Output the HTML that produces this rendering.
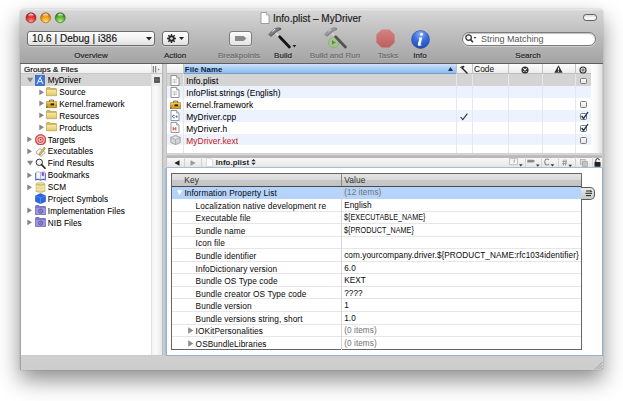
<!DOCTYPE html>
<html><head><meta charset="utf-8">
<style>
*{box-sizing:border-box;margin:0;padding:0}
html,body{width:623px;height:401px;overflow:hidden;background:#fff;font-family:"Liberation Sans",sans-serif;color:#000}
.a{position:absolute}
#win{position:absolute;left:20px;top:9px;width:583px;height:361px;border-radius:4px 4px 0 0;background:linear-gradient(#cbcbcb 96%,#d0d0d0 96%,#cdcdcd);
 box-shadow:0 10px 22px rgba(0,0,0,.45),0 0 2px rgba(0,0,0,.2)}
#tb{position:absolute;left:20px;top:9px;width:583px;height:55px;border-radius:4px 4px 0 0;
 background:linear-gradient(#ececec,#d6d6d6 4%,#bebebe 45%,#a4a4a4);border-bottom:1px solid #5e5e5e}
.tl{position:absolute;top:12.5px;width:10px;height:10px;border-radius:50%;box-shadow:0 0.5px 0.5px rgba(255,255,255,.6)}
.lbl{position:absolute;top:50.8px;font-size:8px;line-height:10px;color:#1a1a1a;text-align:center;white-space:nowrap;text-shadow:0 1px 0 rgba(255,255,255,.3);-webkit-text-stroke:.15px currentColor}
.lbl.dis{color:#6a6a6a}
.t{position:absolute;font-size:8.4px;letter-spacing:.08px;white-space:nowrap;line-height:12px;-webkit-text-stroke:.05px currentColor}
.btn{position:absolute;border:1px solid #6c6c6c;border-radius:3px;background:linear-gradient(#fefefe,#f2f2f2 50%,#e0e0e0);box-shadow:0 1px 0 rgba(255,255,255,.35)}
</style></head><body>
<div id="win"></div>
<div id="tb"></div>
<!-- traffic lights -->
<svg class="a" style="left:25px;top:12px" width="42" height="12" viewBox="0 0 42 12">
<defs>
<radialGradient id="r1" cx=".5" cy=".85" r=".75"><stop offset="0" stop-color="#ff9a90"/><stop offset=".55" stop-color="#e03a32"/><stop offset="1" stop-color="#b01c16"/></radialGradient>
<radialGradient id="r2" cx=".5" cy=".85" r=".75"><stop offset="0" stop-color="#ffe070"/><stop offset=".55" stop-color="#f4a21a"/><stop offset="1" stop-color="#c06a08"/></radialGradient>
<radialGradient id="r3" cx=".5" cy=".85" r=".75"><stop offset="0" stop-color="#b8f090"/><stop offset=".55" stop-color="#62b83a"/><stop offset="1" stop-color="#2e7a18"/></radialGradient>
<linearGradient id="hl" x1="0" y1="0" x2="0" y2="1"><stop offset="0" stop-color="#fff" stop-opacity=".95"/><stop offset="1" stop-color="#fff" stop-opacity="0"/></linearGradient>
</defs>
<circle cx="6" cy="5.8" r="5" fill="url(#r1)" stroke="#8a1a14" stroke-width=".6"/><ellipse cx="6" cy="3.2" rx="2.8" ry="1.8" fill="url(#hl)"/>
<circle cx="20.6" cy="5.8" r="5" fill="url(#r2)" stroke="#9a5a10" stroke-width=".6"/><ellipse cx="20.6" cy="3.2" rx="2.8" ry="1.8" fill="url(#hl)"/>
<circle cx="35.2" cy="5.8" r="5" fill="url(#r3)" stroke="#2a6a18" stroke-width=".6"/><ellipse cx="35.2" cy="3.2" rx="2.8" ry="1.8" fill="url(#hl)"/>
</svg>
<!-- title -->
<svg class="a" style="left:260px;top:12px" width="10" height="12" viewBox="0 0 10 12"><path d="M1 .5h5.5L9 3v8.5H1z" fill="#fff" stroke="#8a8a8a" stroke-width=".8"/><path d="M6.5 .5V3H9" fill="#e8e8e8" stroke="#8a8a8a" stroke-width=".6"/></svg>
<div class="a" style="left:273px;top:11.5px;font-size:10px;line-height:14px;color:#1a1a1a;white-space:nowrap;-webkit-text-stroke:.15px #1a1a1a">Info.plist – MyDriver</div>
<!-- toolbar pill -->
<div class="a" style="left:583px;top:14.2px;width:14px;height:6.4px;border-radius:3.2px;border:1px solid #606060;background:linear-gradient(#d8d8d8,#fafafa 60%,#eee)"></div>
<!-- popup -->
<div class="btn" style="left:27px;top:31px;width:128px;height:15px"></div>
<div class="a" style="left:32px;top:31px;font-size:10px;line-height:15px;color:#111;white-space:nowrap;letter-spacing:.05px;-webkit-text-stroke:.15px #111">10.6 | Debug | i386</div>
<svg class="a" style="left:146px;top:36.5px" width="6" height="4"><path d="M0 0h6L3 3.5z" fill="#222"/></svg>
<!-- action -->
<div class="btn" style="left:161.5px;top:31px;width:27px;height:14.5px"></div>
<svg class="a" style="left:166px;top:33px" width="11" height="11" viewBox="0 0 11 11"><circle cx="5.5" cy="5.5" r="3.1" fill="#262626"/><path d="M5.5 1v9M1 5.5h9M2.3 2.3l6.4 6.4M8.7 2.3l-6.4 6.4" stroke="#262626" stroke-width="1.5"/><circle cx="5.5" cy="5.5" r="1.3" fill="#eee"/></svg>
<svg class="a" style="left:179.2px;top:37px" width="5" height="3"><path d="M0 0h5L2.5 3z" fill="#222"/></svg>
<!-- breakpoints -->
<div class="a" style="left:229px;top:31px;width:22.5px;height:15px;border:1px solid #7c7c7c;border-radius:3px;background:linear-gradient(#fbfbfb,#e4e4e4);box-shadow:0 1px 0 rgba(255,255,255,.3)"></div>
<svg class="a" style="left:235px;top:36px" width="12" height="5"><path d="M0 0h8.5L11.5 2.5 8.5 5H0z" fill="#8a8a8a"/></svg>
<!-- build hammer -->
<svg class="a" style="left:262px;top:24px" width="40" height="28" viewBox="0 0 40 28">
 <defs><linearGradient id="hh" x1="0" y1="0" x2="1" y2="1"><stop offset="0" stop-color="#d8d8d8"/><stop offset=".45" stop-color="#808080"/><stop offset="1" stop-color="#2a2a2a"/></linearGradient></defs>
 <path d="M13.8 8.8L17.8 13" stroke="#d6d6d6" stroke-width="2.3"/>
 <path d="M17.6 12.8L27.4 23" stroke="#141414" stroke-width="2.8" stroke-linecap="round"/>
 <path d="M6.8 10.4L8.8 12.4 12.6 9.4Q14 8.2 14.6 7.8Q16.4 6.2 18.8 5.5L18.5 4Q15.5 3.5 13.2 4.8Q11.6 5.2 10.6 6.6z" fill="url(#hh)" stroke="#3a3a3a" stroke-width=".6"/>
 <path d="M10.2 7.6Q11.4 5.9 13 5.4" stroke="#fff" stroke-width="1" fill="none" opacity=".9"/>
 <path d="M30.6 21h3.6l-1.8 2.5z" fill="#1a1a1a"/>
</svg>
<!-- build and run -->
<svg class="a" style="left:318px;top:24px" width="40" height="28" viewBox="0 0 40 28" opacity=".6">
 <circle cx="15.7" cy="18.5" r="5.3" fill="#98d070" stroke="#5a9a3a" stroke-width=".6"/>
 <path d="M14 16.2v4.6l4-2.3z" fill="#2e6a18"/>
 <path d="M13.8 8.8L17.8 13" stroke="#d6d6d6" stroke-width="2.3"/>
 <path d="M17.6 12.8L27.4 23" stroke="#141414" stroke-width="2.8" stroke-linecap="round"/>
 <path d="M6.8 10.4L8.8 12.4 12.6 9.4Q14 8.2 14.6 7.8Q16.4 6.2 18.8 5.5L18.5 4Q15.5 3.5 13.2 4.8Q11.6 5.2 10.6 6.6z" fill="url(#hh)" stroke="#3a3a3a" stroke-width=".6"/>
 <path d="M10.2 7.6Q11.4 5.9 13 5.4" stroke="#fff" stroke-width="1" fill="none" opacity=".9"/>
</svg>
<!-- tasks -->
<svg class="a" style="left:375.5px;top:29px" width="19" height="19" viewBox="0 0 19 19"><defs><linearGradient id="tg" x1="0" y1="0" x2="0" y2="1"><stop offset="0" stop-color="#d48282"/><stop offset="1" stop-color="#bc5e5e"/></linearGradient></defs><path d="M5.6.4h7.8l5.2 5.2v7.8l-5.2 5.2H5.6L.4 13.4V5.6z" fill="url(#tg)"/></svg>
<!-- info -->
<svg class="a" style="left:411px;top:29.5px" width="19" height="19" viewBox="0 0 19 19"><defs><radialGradient id="ig" cx=".5" cy=".2" r=".85"><stop offset="0" stop-color="#8ab0f6"/><stop offset=".45" stop-color="#3c6fdc"/><stop offset="1" stop-color="#1c45b0"/></radialGradient></defs><circle cx="9.5" cy="9.5" r="9" fill="url(#ig)" stroke="#20409a" stroke-width=".5"/><circle cx="10.5" cy="4.2" r="1.5" fill="#fff"/><path d="M8 7.6h3.3l-1.7 6.6c-.1.5.2.6 1 .2l-.1.8c-1.7 1-4.1 1-3.6-.9l1.4-5.6H7.8z" fill="#fff"/></svg>
<!-- search -->
<div class="a" style="left:461.5px;top:31.5px;width:134.5px;height:14.5px;border-radius:7.5px;border:1px solid #7a7a7a;background:#fff;box-shadow:inset 0 1px 1px rgba(0,0,0,.25),0 1px 0 rgba(255,255,255,.35)"></div>
<svg class="a" style="left:465px;top:34px" width="12" height="9" viewBox="0 0 12 9"><circle cx="3.6" cy="3.6" r="2.8" fill="none" stroke="#333" stroke-width="1.3"/><path d="M5.6 5.6l2.4 2.6" stroke="#333" stroke-width="1.6"/><path d="M8.5 3h3l-1.5 1.8z" fill="#333"/></svg>
<div class="a" style="left:481px;top:31.5px;font-size:9px;line-height:14.5px;color:#555;white-space:nowrap">String Matching</div>
<!-- labels -->
<div class="lbl" style="left:61px;width:60px">Overview</div>
<div class="lbl" style="left:160px;width:30px">Action</div>
<div class="lbl dis" style="left:209px;width:60px">Breakpoints</div>
<div class="lbl" style="left:268px;width:30px">Build</div>
<div class="lbl dis" style="left:305px;width:60px">Build and Run</div>
<div class="lbl dis" style="left:373px;width:30px">Tasks</div>
<div class="lbl" style="left:405px;width:30px">Info</div>
<div class="lbl" style="left:510px;width:36px">Search</div>


<!-- sidebar -->
<svg width="0" height="0" style="position:absolute"><defs><linearGradient id="fg" x1="0" y1="0" x2="0" y2="1"><stop offset="0" stop-color="#f6e8a8"/><stop offset="1" stop-color="#e2c868"/></linearGradient></defs></svg>
<div class="a" style="left:21px;top:64px;width:141px;height:291px;background:#fff"></div>
<div class="a" style="left:151px;top:64px;width:11px;height:291px;background:linear-gradient(90deg,#f4f4f4,#fafafa 40%,#e8e8e8);border-left:1px solid #e2e2e2"></div>
<div class="a" style="left:21px;top:64px;width:130px;height:10px;background:linear-gradient(#fdfdfd,#f0f0f0);border-bottom:1px solid #c8c8c8"></div>
<div class="t" style="left:24px;top:63.8px;font-size:8px;line-height:11px;color:#111;-webkit-text-stroke:.2px #111">Groups &amp; Files</div>
<div class="a" style="left:151px;top:64px;width:11px;height:10px;background:linear-gradient(#fbfbfb,#ececec);border-bottom:1px solid #c8c8c8;border-left:1px solid #ddd"></div>
<svg class="a" style="left:152px;top:66px" width="9" height="7"><path d="M1.3 0v6.5M3.7 0v6.5" stroke="#6a6a6a" stroke-width="1"/><path d="M6.2 2.4l1.4 1L6.2 4.4z" fill="#555"/></svg>
<div class="a" style="left:21px;top:74px;width:130px;height:12px;background:#d5d5d5"></div>
<div class="a" style="left:152px;top:74px;width:10px;height:12px;background:#ececec"></div>
<svg class="a" style="left:153.5px;top:77px" width="6" height="6"><rect x=".3" y=".3" width="5.4" height="5.4" rx=".5" fill="#444" stroke="#333" stroke-width=".4"/><path d="M1 2.2h4M1 3.8h4" stroke="#a0a0a0" stroke-width=".6"/></svg>
<svg class="a" style="left:27.0px;top:76.6px" width="7" height="6"><path d="M0 .8h6.2L3.1 5.6z" fill="#858585"/></svg>
<svg class="a" style="left:34.5px;top:74.6px" width="11" height="11" viewBox="0 0 11 11"><rect x=".5" y=".5" width="9" height="10" fill="#3d78d8" stroke="#1f4fa8" stroke-width=".6"/><path d="M2 9L5 2.5 8 9M3.2 6.6h3.6M5 2.5l1.5-1" stroke="#fff" stroke-width=".9" fill="none"/></svg>
<div class="t" style="left:47.8px;top:75.1px;font-size:8.2px">MyDriver</div>
<svg class="a" style="left:38.5px;top:88.5px" width="6" height="7"><path d="M.3 .4L5 3.3 .3 6.2z" fill="#858585"/></svg>
<svg class="a" style="left:46.0px;top:86.5px" width="11" height="11" viewBox="0 0 11 11"><path d="M.5 8.7V1.3Q.5 .6 1.2 .6H4L5 1.6h4.9Q10.6 1.6 10.6 2.3V8.7z" fill="#d8bc5c" stroke="#a88a30" stroke-width=".6"/><path d="M.8 3h9.5v5.4H.8z" fill="url(#fg)"/></svg>
<div class="t" style="left:59.3px;top:87.0px;font-size:8.2px">Source</div>
<svg class="a" style="left:38.5px;top:100.4px" width="6" height="7"><path d="M.3 .4L5 3.3 .3 6.2z" fill="#858585"/></svg>
<svg class="a" style="left:46.0px;top:98.4px" width="11" height="11" viewBox="0 0 11 11"><path d="M.6 3.6h10v6H.6z" fill="#d8a628" stroke="#7a5a0a" stroke-width=".6"/><path d="M.6 3.6h10v2H.6z" fill="#ecc858"/><path d="M3.6 3.6V2.1h4v1.5" fill="none" stroke="#5a4208" stroke-width=".8"/><rect x="4.6" y="5.4" width="3.4" height="1.9" fill="#2a1e06"/><path d="M1.4 8l-1 2" stroke="#444" stroke-width=".7"/></svg>
<div class="t" style="left:59.3px;top:98.9px;font-size:8.2px">Kernel.framework</div>
<svg class="a" style="left:38.5px;top:112.2px" width="6" height="7"><path d="M.3 .4L5 3.3 .3 6.2z" fill="#858585"/></svg>
<svg class="a" style="left:46.0px;top:110.2px" width="11" height="11" viewBox="0 0 11 11"><path d="M.5 8.7V1.3Q.5 .6 1.2 .6H4L5 1.6h4.9Q10.6 1.6 10.6 2.3V8.7z" fill="#d8bc5c" stroke="#a88a30" stroke-width=".6"/><path d="M.8 3h9.5v5.4H.8z" fill="url(#fg)"/></svg>
<div class="t" style="left:59.3px;top:110.7px;font-size:8.2px">Resources</div>
<svg class="a" style="left:38.5px;top:124.1px" width="6" height="7"><path d="M.3 .4L5 3.3 .3 6.2z" fill="#858585"/></svg>
<svg class="a" style="left:46.0px;top:122.1px" width="11" height="11" viewBox="0 0 11 11"><path d="M.5 8.7V1.3Q.5 .6 1.2 .6H4L5 1.6h4.9Q10.6 1.6 10.6 2.3V8.7z" fill="#d8bc5c" stroke="#a88a30" stroke-width=".6"/><path d="M.8 3h9.5v5.4H.8z" fill="url(#fg)"/></svg>
<div class="t" style="left:59.3px;top:122.6px;font-size:8.2px">Products</div>
<svg class="a" style="left:27.0px;top:136.0px" width="6" height="7"><path d="M.3 .4L5 3.3 .3 6.2z" fill="#858585"/></svg>
<svg class="a" style="left:34.5px;top:134.0px" width="11" height="11" viewBox="0 0 11 11"><circle cx="5.6" cy="5.8" r="5.5" fill="#d84a4a" stroke="#b83030" stroke-width=".4"/><circle cx="5.6" cy="5.8" r="4.2" fill="#f6d0d0"/><circle cx="5.6" cy="5.8" r="3.1" fill="#dc5050"/><circle cx="5.6" cy="5.8" r="1.9" fill="#fbe4e4"/><circle cx="5.6" cy="5.8" r="1" fill="#b83a3a"/></svg>
<div class="t" style="left:47.8px;top:134.5px;font-size:8.2px">Targets</div>
<svg class="a" style="left:27.0px;top:147.9px" width="6" height="7"><path d="M.3 .4L5 3.3 .3 6.2z" fill="#858585"/></svg>
<svg class="a" style="left:34.5px;top:145.9px" width="11" height="11" viewBox="0 0 11 11"><path d="M.8 6.2L5 2.4 10.2 6.4 6 10.4z" fill="#f4f4f4" stroke="#7a7a7a" stroke-width=".6"/><path d="M.8 6.2v1L6 11.2V10.4zM6 10.4v.8L10.2 7.2V6.4z" fill="#c8c8c8"/><path d="M4.4 7.6L9 1.2 10.4 2.2 5.8 8.4 4.2 8.8z" fill="#e6c63a" stroke="#6a5a10" stroke-width=".45"/></svg>
<div class="t" style="left:47.8px;top:146.4px;font-size:8.2px">Executables</div>
<svg class="a" style="left:27.0px;top:159.8px" width="7" height="6"><path d="M0 .8h6.2L3.1 5.6z" fill="#858585"/></svg>
<svg class="a" style="left:34.5px;top:157.8px" width="11" height="11" viewBox="0 0 11 11"><circle cx="4.3" cy="4.3" r="3.2" fill="#f4f4f4" stroke="#333" stroke-width="1"/><path d="M6.6 6.6l3.4 3.6" stroke="#222" stroke-width="1.6" stroke-linecap="round"/></svg>
<div class="t" style="left:47.8px;top:158.3px;font-size:8.2px">Find Results</div>
<svg class="a" style="left:27.0px;top:171.6px" width="6" height="7"><path d="M.3 .4L5 3.3 .3 6.2z" fill="#858585"/></svg>
<svg class="a" style="left:34.5px;top:169.6px" width="11" height="11" viewBox="0 0 11 11"><path d="M.3 3V10.4Q3 9.6 5.5 10.6 8 9.6 10.7 10.4V3z" fill="#2c4cb0"/><path d="M1 2.2Q3.2 1.2 5.5 2.5 7.8 1.2 10 2.2V9.2Q7.8 8.4 5.5 9.6 3.2 8.4 1 9.2z" fill="#f4f6fc" stroke="#6a7ac0" stroke-width=".5"/><path d="M5.5 2.5V9.6" stroke="#6a7ac0" stroke-width=".5"/><path d="M6.8 2.2h2v4.2L7.8 5.4 6.8 6.4z" fill="#8a3ec8"/></svg>
<div class="t" style="left:47.8px;top:170.1px;font-size:8.2px">Bookmarks</div>
<svg class="a" style="left:27.0px;top:183.5px" width="6" height="7"><path d="M.3 .4L5 3.3 .3 6.2z" fill="#858585"/></svg>
<svg class="a" style="left:34.5px;top:181.5px" width="11" height="11" viewBox="0 0 11 11"><ellipse cx="5.5" cy="2" rx="4.5" ry="1.4" fill="#efe2a8" stroke="#b09a50" stroke-width=".5"/><path d="M1 2v7.5Q5.5 11.2 10 9.5V2Q5.5 3.7 1 2z" fill="#e6d48a" stroke="#b09a50" stroke-width=".5"/><path d="M1 4.5Q5.5 6.2 10 4.5M1 7Q5.5 8.7 10 7" stroke="#fff6cc" stroke-width=".7" fill="none"/></svg>
<div class="t" style="left:47.8px;top:182.0px;font-size:8.2px">SCM</div>

<svg class="a" style="left:34.5px;top:193.4px" width="11" height="11" viewBox="0 0 11 11"><path d="M5.5 .5L10.5 2.8V8.5L5.5 10.8.5 8.5V2.8z" fill="#2a66e0" stroke="#1a44a8" stroke-width=".5"/><path d="M.5 2.8L5.5 5 10.5 2.8M5.5 5v5.8" stroke="#7aa6ff" stroke-width=".5" fill="none"/></svg>
<div class="t" style="left:47.8px;top:193.9px;font-size:8.2px">Project Symbols</div>
<svg class="a" style="left:27.0px;top:207.3px" width="6" height="7"><path d="M.3 .4L5 3.3 .3 6.2z" fill="#858585"/></svg>
<svg class="a" style="left:34.5px;top:205.3px" width="11" height="11" viewBox="0 0 11 11"><path d="M.5 2.2V1.2Q.5 .5 1.2 .5H4L5 1.5h5Q10.8 1.5 10.8 2.2V9.5H.5z" fill="#7e78cc" stroke="#524c9c" stroke-width=".6"/><path d="M.8 3h9.7v6.2H.8z" fill="#9c96de"/><circle cx="5.6" cy="6.1" r="2" fill="none" stroke="#5c56a8" stroke-width="1"/><circle cx="5.6" cy="6.1" r=".7" fill="#5c56a8"/></svg>
<div class="t" style="left:47.8px;top:205.8px;font-size:8.2px">Implementation Files</div>
<svg class="a" style="left:27.0px;top:219.2px" width="6" height="7"><path d="M.3 .4L5 3.3 .3 6.2z" fill="#858585"/></svg>
<svg class="a" style="left:34.5px;top:217.2px" width="11" height="11" viewBox="0 0 11 11"><path d="M.5 2.2V1.2Q.5 .5 1.2 .5H4L5 1.5h5Q10.8 1.5 10.8 2.2V9.5H.5z" fill="#7e78cc" stroke="#524c9c" stroke-width=".6"/><path d="M.8 3h9.7v6.2H.8z" fill="#9c96de"/><circle cx="5.6" cy="6.1" r="2" fill="none" stroke="#5c56a8" stroke-width="1"/><circle cx="5.6" cy="6.1" r=".7" fill="#5c56a8"/></svg>
<div class="t" style="left:47.8px;top:217.7px;font-size:8.2px">NIB Files</div>
<div class="a" style="left:162px;top:64px;width:5px;height:291px;background:linear-gradient(90deg,#b4b4b4,#c0c0c0 25%,#d4d4d4 35%,#d0d0d0 85%,#a8a8a8)"></div>
<!-- file list -->
<div class="a" style="left:167px;top:64px;width:435px;height:89px;background:#fff"></div>
<div class="a" style="left:167px;top:64px;width:435px;height:10px;background:linear-gradient(#fdfdfd,#ececec);border-bottom:1px solid #bdbdbd"></div>
<div class="a" style="left:183px;top:64px;width:273px;height:10px;background:linear-gradient(#cfe2fb,#a9cdf6 50%,#8ebcf2);border-bottom:1px solid #7a9cc8"></div>
<div class="t" style="left:184.8px;top:64.3px;font-size:7.8px;line-height:11px;color:#0e1c3c;font-weight:bold;-webkit-text-stroke:0">File Name</div>
<svg class="a" style="left:447.5px;top:67px" width="5" height="4"><path d="M0 4L2.5 0 5 4z" fill="#1e3050"/></svg>
<div class="a" style="left:456px;top:64px;width:1px;height:10px;background:#c4c4c4"></div>
<div class="a" style="left:472px;top:64px;width:1px;height:10px;background:#c4c4c4"></div>
<div class="a" style="left:508px;top:64px;width:1px;height:10px;background:#c4c4c4"></div>
<div class="a" style="left:541.5px;top:64px;width:1px;height:10px;background:#c4c4c4"></div>
<div class="a" style="left:574.5px;top:64px;width:1px;height:10px;background:#c4c4c4"></div>
<div class="a" style="left:590.5px;top:64px;width:1px;height:10px;background:#c4c4c4"></div>
<div class="a" style="left:182.5px;top:64px;width:1px;height:10px;background:#c4c4c4"></div>
<svg class="a" style="left:459px;top:65px" width="10" height="9" viewBox="0 0 10 9"><path d="M3 3l5 5" stroke="#222" stroke-width="1.4" stroke-linecap="round"/><path d="M.8 2.6Q2.5 .6 5 .8L5.6 1.6 3.8 3.6 2.8 2.6Q1.8 2.4 1.2 3z" fill="#333"/></svg>
<div class="t" style="left:474px;top:64px;font-size:8.4px;line-height:11px;color:#1a1a1a">Code</div>
<svg class="a" style="left:521px;top:65.5px" width="8" height="8"><circle cx="4" cy="4" r="3.6" fill="#333"/><path d="M2.4 2.4l3.2 3.2M5.6 2.4L2.4 5.6" stroke="#fff" stroke-width="1.1"/></svg>
<svg class="a" style="left:553.5px;top:65px" width="9" height="8"><path d="M4.5 .3L8.7 7.7H.3z" fill="#333"/><path d="M4.5 2.8v2.6" stroke="#fff" stroke-width="1"/><circle cx="4.5" cy="6.4" r=".5" fill="#fff"/></svg>
<svg class="a" style="left:578.5px;top:65.5px" width="8" height="8"><circle cx="4" cy="4" r="3.6" fill="#333"/><circle cx="4" cy="4" r="2" fill="none" stroke="#fff" stroke-width="1"/><circle cx="4" cy="4" r=".7" fill="#fff"/></svg>
<div class="a" style="left:167px;top:74.00px;width:424px;height:11.90px;background:#d4d4d4"></div>
<svg class="a" style="left:169.5px;top:74.7px" width="11" height="11" viewBox="0 0 11 11"><path d="M1 .5h5.5L9 3v7.5H1z" fill="#fdfdfd" stroke="#6a6a6a" stroke-width=".7"/><path d="M6.5 .5V3H9" fill="#e4e4e4" stroke="#6a6a6a" stroke-width=".5"/><path d="M2.5 4.6h4.5M2.5 6.1h4.5M2.5 7.6h4.5M4.5 4.6v4" stroke="#a8a8a8" stroke-width=".5"/></svg>
<div class="t" style="left:186.3px;top:75.00px;color:#000">Info.plist</div>
<div class="a" style="left:580px;top:77.60px;width:6.5px;height:6.5px;border:1px solid #7a7a7a;border-radius:1.5px;background:linear-gradient(#fdfdfd,#e4e4e4)"></div>
<div class="a" style="left:167px;top:85.90px;width:424px;height:11.90px;background:#edf3fe"></div>
<svg class="a" style="left:169.5px;top:86.6px" width="11" height="11" viewBox="0 0 11 11"><path d="M1 .5h5.5L9 3v7.5H1z" fill="#fdfdfd" stroke="#6a6a6a" stroke-width=".7"/><path d="M6.5 .5V3H9" fill="#e4e4e4" stroke="#6a6a6a" stroke-width=".5"/><path d="M2.5 4.6h4.5M2.5 6.1h4.5M2.5 7.6h4.5M4.5 4.6v4" stroke="#a8a8a8" stroke-width=".5"/></svg>
<div class="t" style="left:186.3px;top:86.90px;color:#000">InfoPlist.strings (English)</div>
<div class="a" style="left:167px;top:97.80px;width:424px;height:11.90px;background:#fff"></div>
<svg class="a" style="left:169.5px;top:98.5px" width="11" height="11" viewBox="0 0 11 11"><path d="M.6 3.6h10v6H.6z" fill="#d8a628" stroke="#7a5a0a" stroke-width=".6"/><path d="M.6 3.6h10v2H.6z" fill="#ecc858"/><path d="M3.6 3.6V2.1h4v1.5" fill="none" stroke="#5a4208" stroke-width=".8"/><rect x="4.6" y="5.4" width="3.4" height="1.9" fill="#2a1e06"/><path d="M1.4 8l-1 2" stroke="#444" stroke-width=".7"/></svg>
<div class="t" style="left:186.3px;top:98.80px;color:#000">Kernel.framework</div>
<div class="a" style="left:580px;top:101.40px;width:6.5px;height:6.5px;border:1px solid #7a7a7a;border-radius:1.5px;background:linear-gradient(#fdfdfd,#e4e4e4)"></div>
<div class="a" style="left:167px;top:109.70px;width:424px;height:11.90px;background:#edf3fe"></div>
<svg class="a" style="left:169.5px;top:110.4px" width="11" height="11" viewBox="0 0 11 11"><path d="M1 .5h5.5L9 3v7.5H1z" fill="#fdfdfd" stroke="#6a6a6a" stroke-width=".7"/><path d="M6.5 .5V3H9" fill="#e4e4e4" stroke="#6a6a6a" stroke-width=".5"/><path d="M4.6 5.6Q3.8 4.9 3.1 5.3 2.3 5.9 2.6 7 3 8 4.6 7.6" stroke="#2848b8" stroke-width=".9" fill="none"/><path d="M5.3 6.6h2.6M6.6 5.3v2.6" stroke="#2848b8" stroke-width=".6"/></svg>
<div class="t" style="left:186.3px;top:110.70px;color:#000">MyDriver.cpp</div>
<svg class="a" style="left:460px;top:112.90px" width="8" height="8"><path d="M.6 4L2.8 6.6 7.4 .6" stroke="#333" stroke-width="1.1" fill="none"/></svg>
<div class="a" style="left:580px;top:113.30px;width:6.5px;height:6.5px;border:1px solid #7a7a7a;border-radius:1.5px;background:linear-gradient(#fdfdfd,#e4e4e4)"></div>
<svg class="a" style="left:580px;top:111.30px" width="9" height="9"><path d="M1.6 5L3.6 7.4 8 1" stroke="#1a2a50" stroke-width="1.3" fill="none"/></svg>
<div class="a" style="left:167px;top:121.60px;width:424px;height:11.90px;background:#fff"></div>
<svg class="a" style="left:169.5px;top:122.3px" width="11" height="11" viewBox="0 0 11 11"><path d="M1 .5h5.5L9 3v7.5H1z" fill="#fdfdfd" stroke="#6a6a6a" stroke-width=".7"/><path d="M6.5 .5V3H9" fill="#e4e4e4" stroke="#6a6a6a" stroke-width=".5"/><path d="M3.2 5v3.6M5.8 5v3.6M3.2 6.8h2.6" stroke="#c02828" stroke-width=".8"/></svg>
<div class="t" style="left:186.3px;top:122.60px;color:#000">MyDriver.h</div>
<div class="a" style="left:580px;top:125.20px;width:6.5px;height:6.5px;border:1px solid #7a7a7a;border-radius:1.5px;background:linear-gradient(#fdfdfd,#e4e4e4)"></div>
<svg class="a" style="left:580px;top:123.20px" width="9" height="9"><path d="M1.6 5L3.6 7.4 8 1" stroke="#1a2a50" stroke-width="1.3" fill="none"/></svg>
<div class="a" style="left:167px;top:133.50px;width:424px;height:11.90px;background:#edf3fe"></div>
<svg class="a" style="left:169.5px;top:134.2px" width="11" height="11" viewBox="0 0 11 11"><path d="M.8 3.4L5.5 1.4 10.2 3.4V8.6L5.5 10.6.8 8.6z" fill="#d6d6d6" stroke="#7a7a7a" stroke-width=".6"/><path d="M.8 3.4L5.5 5.4 10.2 3.4" fill="#f2f2f2" stroke="#7a7a7a" stroke-width=".5"/><path d="M5.5 5.4v5.2" stroke="#8a8a8a" stroke-width=".5"/></svg>
<div class="t" style="left:186.3px;top:134.50px;color:#c41f1f">MyDriver.kext</div>
<div class="a" style="left:580px;top:137.10px;width:6.5px;height:6.5px;border:1px solid #7a7a7a;border-radius:1.5px;background:linear-gradient(#fdfdfd,#e4e4e4)"></div>
<div class="a" style="left:456px;top:74px;width:1px;height:78.5px;background:#e4e8ee"></div>
<div class="a" style="left:472px;top:74px;width:1px;height:78.5px;background:#e4e8ee"></div>
<div class="a" style="left:508px;top:74px;width:1px;height:78.5px;background:#e4e8ee"></div>
<div class="a" style="left:541.5px;top:74px;width:1px;height:78.5px;background:#e4e8ee"></div>
<div class="a" style="left:574.5px;top:74px;width:1px;height:78.5px;background:#e4e8ee"></div>
<div class="a" style="left:590.5px;top:74px;width:1px;height:78.5px;background:#e4e8ee"></div>
<div class="a" style="left:182.5px;top:74px;width:1px;height:78.5px;background:#e4e8ee"></div>
<div class="a" style="left:591px;top:64px;width:11px;height:89px;background:linear-gradient(90deg,#fff,#f7f7f7 50%,#e2e2e2)"></div>
<div class="a" style="left:167px;top:152.5px;width:435px;height:5px;background:linear-gradient(#d2d2d2,#d6d6d6 35%,#bababa 55%,#b4b4b4 85%,#c8c8c8)"></div>
<div class="a" style="left:167px;top:157.5px;width:435px;height:10px;background:linear-gradient(#f8f8f8,#e6e6e6);border-bottom:1px solid #a4bcd8"></div>
<!-- editor -->
<div class="a" style="left:166px;top:167.5px;width:436.5px;height:188px;background:#fff;border:1px solid #96aed0;border-top:none"></div>
<div class="a" style="left:162.5px;top:167.5px;width:3.5px;height:188px;background:linear-gradient(90deg,#d2d6dc,#b8c6d8 60%,#a8bcd6)"></div>
<svg class="a" style="left:173.5px;top:159.5px" width="6" height="6"><path d="M5.5 .2v5.6L.3 3z" fill="#222"/></svg>
<div class="a" style="left:184px;top:157px;width:1px;height:10px;background:#d0d0d0"></div>
<svg class="a" style="left:189.5px;top:159.5px" width="6" height="6"><path d="M.5 .2v5.6L5.7 3z" fill="#9a9a9a"/></svg>
<div class="a" style="left:200.5px;top:157px;width:1px;height:10px;background:#d0d0d0"></div>
<svg class="a" style="left:206px;top:158.2px" width="7" height="9" viewBox="0 0 7 9"><path d="M.4 .4h4.2L6.6 2.4v6.2H.4z" fill="#fff" stroke="#bdbdbd" stroke-width=".5"/></svg>
<div class="t" style="left:215.8px;top:156.8px;font-size:7.8px;line-height:11px;color:#222;font-weight:bold;-webkit-text-stroke:0">Info.plist</div>
<svg class="a" style="left:251.3px;top:159.3px" width="5" height="6"><path d="M2.5 0L4.7 2.3H.3zM2.5 6L4.7 3.7H.3z" fill="#222"/></svg>
<div class="a" style="left:524.5px;top:157px;width:1px;height:10px;background:#d4d4d4"></div>
<div class="a" style="left:541px;top:157px;width:1px;height:10px;background:#d4d4d4"></div>
<div class="a" style="left:558.3px;top:157px;width:1px;height:10px;background:#d4d4d4"></div>
<div class="a" style="left:574.8px;top:157px;width:1px;height:10px;background:#d4d4d4"></div>
<div class="a" style="left:592px;top:157px;width:1px;height:10px;background:#d4d4d4"></div>
<svg class="a" style="left:508.5px;top:158px" width="15" height="9" viewBox="0 0 15 9"><path d="M.5 .6h8v6h-8z" fill="#f6f6f6" stroke="#a0a0a0" stroke-width=".6"/><path d="M5.2 1.6v3" stroke="#777" stroke-width=".7"/><path d="M10 6.2h3.6l-1.8 2.2z" fill="#333"/></svg>
<svg class="a" style="left:527px;top:158.5px" width="14" height="8" viewBox="0 0 14 8"><path d="M.3 .8h6l1.8 1.3-1.8 1.3h-6z" fill="#8a8a8a"/><path d="M9 5.6h3.6l-1.8 2.2z" fill="#333"/></svg>
<svg class="a" style="left:543.5px;top:158px" width="14" height="9" viewBox="0 0 14 9"><path d="M5 2Q4.3 1 3 1 .8 1 .8 4 .8 7 3 7 4.3 7 5 6" fill="none" stroke="#8a8a8a" stroke-width="1.1"/><path d="M6.6 6.2h3.6l-1.8 2.2z" fill="#333"/></svg>
<svg class="a" style="left:561.5px;top:158.5px" width="13" height="9" viewBox="0 0 13 9"><path d="M2 .5L1.4 6.5M4.2 .5L3.6 6.5M.4 2.4h4.6M.2 4.6h4.6" stroke="#8a8a8a" stroke-width=".8"/><path d="M6.4 5.8h3.6l-1.8 2.2z" fill="#333"/></svg>
<svg class="a" style="left:579.5px;top:158.5px" width="8" height="8" viewBox="0 0 8 8"><rect x=".5" y=".5" width="4.6" height="4.6" fill="#e0e0e0" stroke="#999" stroke-width=".6"/><rect x="2.6" y="2.6" width="4.8" height="4.8" fill="#c4c4c4" stroke="#999" stroke-width=".6"/></svg>
<svg class="a" style="left:594px;top:157.5px" width="7" height="9" viewBox="0 0 7 9"><path d="M1.8 4V2.5Q1.8 .6 3.6 .6 5.3 .6 5.3 2.2" fill="none" stroke="#222" stroke-width="1"/><rect x=".5" y="4" width="6" height="4.8" rx=".6" fill="#222"/></svg>
<div class="a" style="left:171px;top:173px;width:411px;height:177px;border:1px solid #666;background:#fff"></div>
<div class="a" style="left:172px;top:174px;width:409px;height:12.5px;background:linear-gradient(#e4e4e4,#dadada 52%,#c8c8c8 53%,#c4c4c4);border-bottom:1px solid #4a4a4a"></div>
<div class="a" style="left:341px;top:174px;width:1px;height:12px;background:#8a8a8a"></div>
<div class="t" style="left:184.3px;top:173.5px;color:#383838">Key</div>
<div class="t" style="left:344.2px;top:173.5px;color:#383838">Value</div>
<div class="a" style="left:172px;top:186.50px;width:409px;height:12.55px;background:#b6d4fb"></div>
<svg class="a" style="left:176.6px;top:190.30px" width="6" height="6"><path d="M0 .2h5.4L2.7 5.2z" fill="#fff"/></svg>
<div class="t" style="left:184.4px;top:187.20px;color:#111;font-size:8.3px">Information Property List</div>
<div class="t" style="left:344.2px;top:187.20px;color:#777;font-size:8.2px">(12 items)</div>
<div class="a" style="left:172px;top:210.60px;width:409px;height:1px;background:#e6e6e6"></div>
<div class="t" style="left:195.6px;top:199.75px;color:#111;font-size:8.3px">Localization native development re</div>
<div class="t" style="left:344.2px;top:199.75px;color:#111;font-size:8.2px">English</div>
<div class="a" style="left:172px;top:223.15px;width:409px;height:1px;background:#e6e6e6"></div>
<div class="t" style="left:195.6px;top:212.30px;color:#111;font-size:8.3px">Executable file</div>
<div class="t" style="left:344.2px;top:212.30px;color:#111;font-size:8.2px;transform:scaleX(.875);transform-origin:0 0">${EXECUTABLE_NAME}</div>
<div class="a" style="left:172px;top:235.70px;width:409px;height:1px;background:#e6e6e6"></div>
<div class="t" style="left:195.6px;top:224.85px;color:#111;font-size:8.3px">Bundle name</div>
<div class="t" style="left:344.2px;top:224.85px;color:#111;font-size:8.2px;transform:scaleX(.875);transform-origin:0 0">${PRODUCT_NAME}</div>
<div class="a" style="left:172px;top:248.25px;width:409px;height:1px;background:#e6e6e6"></div>
<div class="t" style="left:195.6px;top:237.40px;color:#111;font-size:8.3px">Icon file</div>
<div class="a" style="left:172px;top:260.80px;width:409px;height:1px;background:#e6e6e6"></div>
<div class="t" style="left:195.6px;top:249.95px;color:#111;font-size:8.3px">Bundle identifier</div>
<div class="t" style="left:344.2px;top:249.95px;color:#111;font-size:8.2px">com.yourcompany.driver.${PRODUCT_NAME:rfc1034identifier}</div>
<div class="a" style="left:172px;top:273.35px;width:409px;height:1px;background:#e6e6e6"></div>
<div class="t" style="left:195.6px;top:262.50px;color:#111;font-size:8.3px">InfoDictionary version</div>
<div class="t" style="left:344.2px;top:262.50px;color:#111;font-size:8.2px">6.0</div>
<div class="a" style="left:172px;top:285.90px;width:409px;height:1px;background:#e6e6e6"></div>
<div class="t" style="left:195.6px;top:275.05px;color:#111;font-size:8.3px">Bundle OS Type code</div>
<div class="t" style="left:344.2px;top:275.05px;color:#111;font-size:8.2px">KEXT</div>
<div class="a" style="left:172px;top:298.45px;width:409px;height:1px;background:#e6e6e6"></div>
<div class="t" style="left:195.6px;top:287.60px;color:#111;font-size:8.3px">Bundle creator OS Type code</div>
<div class="t" style="left:344.2px;top:287.60px;color:#111;font-size:8.2px">????</div>
<div class="a" style="left:172px;top:311.00px;width:409px;height:1px;background:#e6e6e6"></div>
<div class="t" style="left:195.6px;top:300.15px;color:#111;font-size:8.3px">Bundle version</div>
<div class="t" style="left:344.2px;top:300.15px;color:#111;font-size:8.2px">1</div>
<div class="a" style="left:172px;top:323.55px;width:409px;height:1px;background:#e6e6e6"></div>
<div class="t" style="left:195.6px;top:312.70px;color:#111;font-size:8.3px">Bundle versions string, short</div>
<div class="t" style="left:344.2px;top:312.70px;color:#111;font-size:8.2px">1.0</div>
<div class="a" style="left:172px;top:336.10px;width:409px;height:1px;background:#e6e6e6"></div>
<svg class="a" style="left:188px;top:327.15px" width="6" height="7"><path d="M.2 .3L5.4 3.5 .2 6.7z" fill="#8c8c8c"/></svg>
<div class="t" style="left:195.6px;top:325.25px;color:#111;font-size:8.3px">IOKitPersonalities</div>
<div class="t" style="left:344.2px;top:325.25px;color:#777;font-size:8.2px">(0 items)</div>
<svg class="a" style="left:188px;top:339.70px" width="6" height="7"><path d="M.2 .3L5.4 3.5 .2 6.7z" fill="#8c8c8c"/></svg>
<div class="t" style="left:195.6px;top:337.80px;color:#111;font-size:8.3px">OSBundleLibraries</div>
<div class="t" style="left:344.2px;top:337.80px;color:#777;font-size:8.2px">(0 items)</div>
<div class="a" style="left:341px;top:186.5px;width:1px;height:163px;background:#d6d6d6"></div>
<div class="a" style="left:581px;top:187px;width:14px;height:12.5px;border:1px solid #5a5a5a;border-left:none;border-radius:0 5px 5px 0;background:linear-gradient(#eeeeee,#d6d6d6 50%,#c8c8c8)"></div>
<svg class="a" style="left:584.5px;top:189.5px" width="8" height="7"><path d="M1 1h5M.5 3.3h6.5M1 5.6h5" stroke="#222" stroke-width="1"/><path d="M5.5 .2l2 1-2 1z" fill="#222"/></svg>
<svg class="a" style="left:594px;top:361px" width="9" height="9"><path d="M8.5 1L1 8.5M8.5 4L4 8.5M8.5 7L7 8.5" stroke="#8a8a8a" stroke-width=".7"/></svg>
<div class="a" style="left:20px;top:64px;width:1px;height:306px;background:#a4a4a4"></div>
</body></html>
